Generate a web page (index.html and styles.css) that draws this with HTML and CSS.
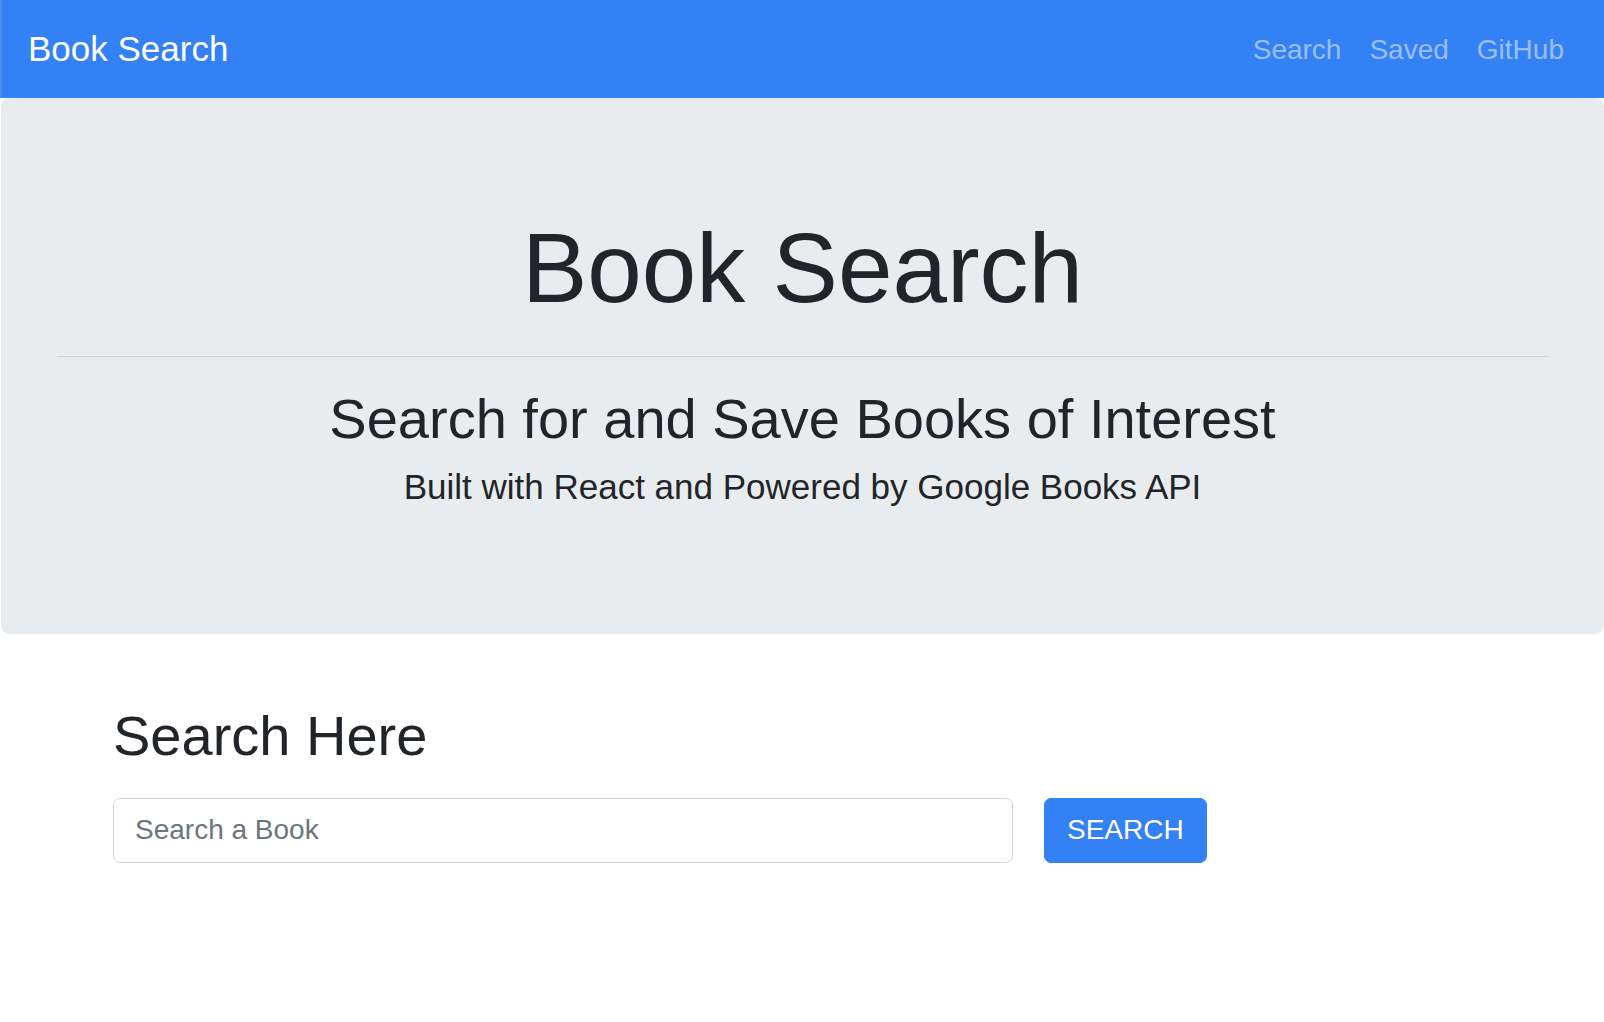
FILE: index.html
```html
<!DOCTYPE html>
<html lang="en">
<head>
<meta charset="utf-8">
<title>Book Search</title>
<link rel="stylesheet" href="styles.css">
</head>
<body>
<nav class="navbar">
  <a class="brand" href="#">Book Search</a>
  <div class="nav-links">
    <a class="nav-link" href="#">Search</a>
    <a class="nav-link" href="#">Saved</a>
    <a class="nav-link" href="#">GitHub</a>
  </div>
</nav>
<header class="jumbotron">
  <h1 class="display">Book Search</h1>
  <hr class="divider">
  <h2 class="lead-title">Search for and Save Books of Interest</h2>
  <h5 class="sub-title">Built with React and Powered by Google Books API</h5>
</header>
<main class="search-section">
  <h2 class="section-title">Search Here</h2>
  <form class="search-form">
    <input class="search-input" type="text" placeholder="Search a Book">
    <button class="search-btn" type="button">Search</button>
  </form>
</main>
</body>
</html>
```

FILE: styles.css
```css
* { box-sizing: border-box; }

html, body {
  margin: 0;
  padding: 0;
  background: #ffffff;
}

body {
  font-family: "Liberation Sans", Arial, Helvetica, sans-serif;
  color: #212529;
}

.navbar {
  display: flex;
  justify-content: space-between;
  align-items: center;
  padding: 14px 26px 14px 28px;
  background: #3480f5;
  border-left: 2px solid #4a8ff7;
}

.brand {
  padding: 8.75px 0;
  margin-left: -2px;
  font-size: 35px;
  line-height: 52.5px;
  color: #ffffff;
  text-decoration: none;
}

.nav-links {
  display: flex;
  margin-top: 2px;
}

.nav-link {
  padding: 8px 14px;
  font-size: 28px;
  line-height: 42px;
  color: rgba(255, 255, 255, 0.5);
  text-decoration: none;
}

.jumbotron {
  margin: 0 0 56px 1px;
  padding: 112px 56px;
  background: #e9ecef;
  border-radius: 8.4px;
  text-align: center;
}

.display {
  margin: 0 0 14px;
  font-size: 98px;
  font-weight: 300;
  line-height: 1.2;
}

.divider {
  margin: 28px 0;
  border: 0;
  border-top: 1px solid rgba(0, 0, 0, 0.1);
}

.lead-title {
  margin: 0 0 14px;
  font-size: 56px;
  font-weight: 400;
  line-height: 1.2;
}

.sub-title {
  margin: 0 0 14px;
  font-size: 35px;
  font-weight: 400;
  line-height: 1.2;
}

.search-section {
  padding: 12px 0 0 113px;
}

.section-title {
  margin: 0;
  font-size: 56px;
  font-weight: 400;
  line-height: 1.2;
}

.search-form {
  display: flex;
  align-items: flex-start;
  gap: 31px;
  margin-top: 29px;
}

.search-input {
  width: 900px;
  height: 65px;
  padding: 10.5px 21px;
  font-family: inherit;
  font-size: 28px;
  line-height: 42px;
  color: #495057;
  background: #ffffff;
  border: 1px solid #ced4da;
  border-radius: 7px;
  outline: none;
}

.search-input::placeholder {
  color: #6c757d;
}

.search-btn {
  height: 65px;
  padding: 10.5px 22px;
  font-family: inherit;
  font-size: 28px;
  line-height: 42px;
  text-transform: uppercase;
  color: #ffffff;
  background: #3480f5;
  border: 1px solid #3480f5;
  border-radius: 7px;
  cursor: pointer;
}
```
